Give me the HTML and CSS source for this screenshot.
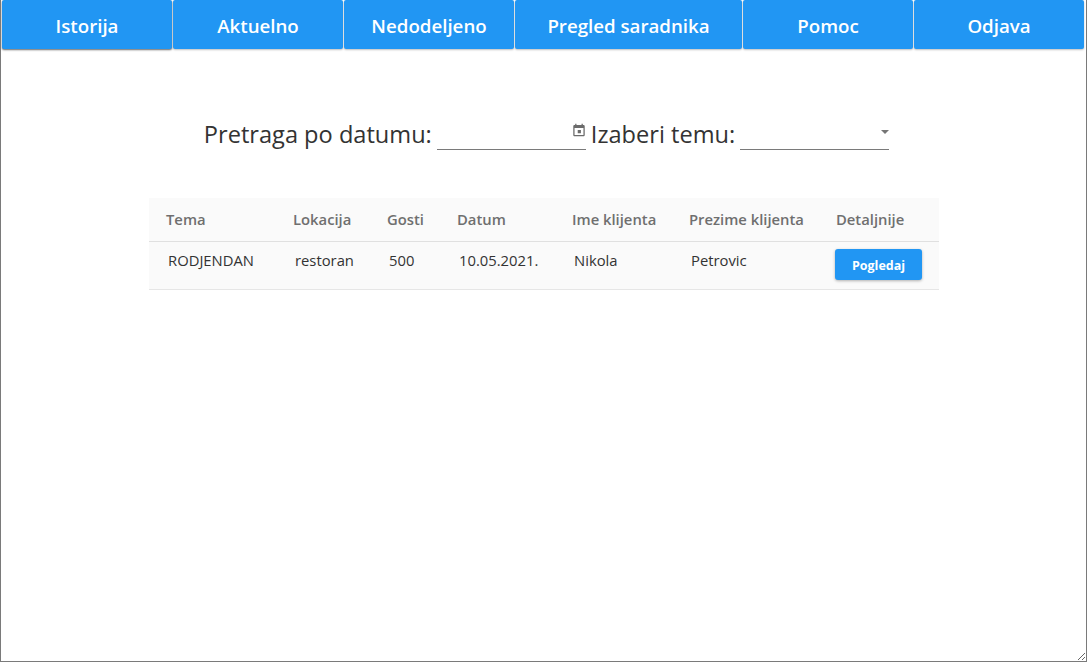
FILE: index.html
```html
<!DOCTYPE html>
<html lang="sr">
<head>
<meta charset="utf-8">
<title>Istorija</title>
<link rel="stylesheet" href="styles.css">
</head>
<body>
<div class="frame">
  <nav class="nav">
    <button class="nav-btn active">Istorija</button>
    <button class="nav-btn">Aktuelno</button>
    <button class="nav-btn">Nedodeljeno</button>
    <button class="nav-btn wide">Pregled saradnika</button>
    <button class="nav-btn">Pomoc</button>
    <button class="nav-btn">Odjava</button>
  </nav>
  <main class="content">
    <div class="search">
      <span class="label">Pretraga po datumu:</span>
      <div class="field">
        <svg class="cal" width="14" height="14" viewBox="2 0 20 22"><path fill="#6b6b6b" d="M19 3h-1V1h-2v2H8V1H6v2H5c-1.11 0-2 .9-2 2v14c0 1.1.89 2 2 2h14c1.1 0 2-.9 2-2V5c0-1.1-.9-2-2-2zm0 16H5V8h14v11zM10 11h5v5h-5z"/></svg>
      </div>
      <span class="label">Izaberi temu:</span>
      <div class="field">
        <span class="arrow"></span>
      </div>
    </div>
    <table class="table">
      <colgroup>
        <col class="c1"><col class="c2"><col class="c3"><col class="c4"><col class="c5"><col class="c6"><col class="c7">
      </colgroup>
      <thead>
        <tr>
          <th>Tema</th><th>Lokacija</th><th>Gosti</th><th>Datum</th><th>Ime klijenta</th><th>Prezime klijenta</th><th>Detaljnije</th>
        </tr>
      </thead>
      <tbody>
        <tr>
          <td>RODJENDAN</td><td>restoran</td><td>500</td><td>10.05.2021.</td><td>Nikola</td><td>Petrovic</td>
          <td class="btn-cell"><button class="view-btn">Pogledaj</button></td>
        </tr>
      </tbody>
    </table>
  </main>
</div>
</body>
</html>
```
FILE: styles.css
```css
html, body {
  margin: 0;
  padding: 0;
  background: #ffffff;
}
body {
  font-family: "Open Sans", "Noto Sans", sans-serif;
}
.frame {
  box-sizing: border-box;
  width: 1087px;
  height: 662px;
  border-left: 1px solid #7a7a7a;
  border-right: 1px solid #7a7a7a;
  border-bottom: 1px solid #7a7a7a;
  overflow: hidden;
  resize: both;
}
.nav {
  display: flex;
  gap: 1px;
  padding-left: 1px;
}
.nav-btn {
  width: 170px;
  height: 49px;
  border: none;
  border-radius: 2px;
  background: #2196f3;
  color: #ffffff;
  font-family: "Open Sans", "Noto Sans", sans-serif;
  font-weight: 600;
  font-size: 18.7px;
  padding: 2px 0 0 0;
  box-shadow: 0 1px 2px rgba(0, 0, 0, 0.25);
  cursor: pointer;
}
.nav-btn.wide {
  width: 227px;
}
.nav-btn.active {
  box-shadow: 0 1px 2px rgba(0, 0, 0, 0.6);
}
.content {
  display: flex;
  flex-direction: column;
  align-items: center;
  padding-top: 68px;
}
.search {
  display: flex;
  align-items: flex-end;
  height: 33px;
  margin-left: 11px;
}
.label {
  font-size: 23.6px;
  color: #333333;
  line-height: 31px;
}
.field {
  position: relative;
  width: 149px;
  height: 32px;
  border-bottom: 1px solid #7a7a7a;
  margin: 0 5px 0 5px;
}
.cal {
  position: absolute;
  right: 0;
  top: 6px;
}
.arrow {
  position: absolute;
  right: 0;
  top: 13px;
  width: 0;
  height: 0;
  border-left: 4px solid transparent;
  border-right: 4px solid transparent;
  border-top: 4px solid #757575;
}
.table {
  margin-top: 48px;
  width: 790px;
  border-collapse: collapse;
  table-layout: fixed;
  margin-left: 1px;
}
.c1 { width: 127px; }
.c2 { width: 94px; }
.c3 { width: 70px; }
.c4 { width: 115px; }
.c5 { width: 117px; }
.c6 { width: 147px; }
.c7 { width: 120px; }
.table th {
  background: #fafafa;
  height: 42px;
  padding: 0 0 1px 17px;
  text-align: left;
  font-size: 14.8px;
  font-weight: 600;
  color: #6f6f6f;
  border-bottom: 1px solid #e0e0e0;
  white-space: nowrap;
}
.table td {
  background: #fafafa;
  height: 48px;
  padding: 8px 0 0 19px;
  box-sizing: border-box;
  vertical-align: top;
  font-size: 14.8px;
  color: #333333;
  border-bottom: 1px solid #e6e6e6;
  white-space: nowrap;
}
.table td.btn-cell {
  padding: 7px 0 0 16px;
}
.view-btn {
  width: 87px;
  height: 31px;
  border: none;
  border-radius: 3px;
  background: #2196f3;
  color: #ffffff;
  font-family: "Open Sans", "Noto Sans", sans-serif;
  font-weight: 700;
  font-size: 12.5px;
  padding: 1px 0 0 0;
  box-shadow: 0 1px 3px rgba(0, 0, 0, 0.3);
  cursor: pointer;
}
```
